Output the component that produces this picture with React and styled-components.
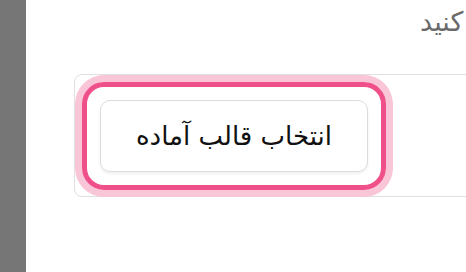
import React from "react";
import styled, { createGlobalStyle } from "styled-components";

const Global = createGlobalStyle`
  html, body { margin: 0; padding: 0; background: #ffffff; overflow: hidden; }
  body { font-family: "DejaVu Sans", "Noto Sans", sans-serif; }
`;

const Page = styled.div`
  display: flex;
  height: 272px;
  width: 466px;
  overflow: hidden;
`;

const Sidebar = styled.div`
  flex: 0 0 26px;
  background: #767676;
`;

const Main = styled.div`
  flex: 1 0 auto;
  display: flex;
  flex-direction: column;
  padding-left: 48px;
  width: 640px;
`;

const Title = styled.div`
  direction: rtl;
  text-align: left;
  white-space: nowrap;
  margin: 4px 0 0 346px;
  width: 600px;
  height: 70px;
  font-size: 27px;
  line-height: 36px;
  color: #6a6a6a;
`;

const Panel = styled.div`
  display: flex;
  align-items: flex-start;
  width: 620px;
  padding: 7px 0 6px 7px;
  border: 1px solid #e0e0e0;
  border-radius: 8px;
`;

const Ring = styled.div`
  display: flex;
  padding: 13px;
  border: 5px solid #f0508a;
  border-radius: 22px;
  box-shadow: 0 0 0 7px #f9c6d7;
`;

const Button = styled.button`
  width: 268px;
  height: 72px;
  display: flex;
  align-items: center;
  justify-content: center;
  direction: rtl;
  background: #ffffff;
  border: 1px solid #dcdcdc;
  border-radius: 10px;
  box-shadow: 0 2px 3px rgba(0, 0, 0, 0.06);
  font-family: "DejaVu Sans", "Noto Sans", sans-serif;
  font-size: 26px;
  color: #111111;
  padding: 0;
`;

export default function App() {
  return (
    <>
      <Global />
      <Page>
        <Sidebar />
        <Main>
          <Title>قالب مورد نظر خود را انتخاب کنید</Title>
          <Panel>
            <Ring>
              <Button>انتخاب قالب آماده</Button>
            </Ring>
          </Panel>
        </Main>
      </Page>
    </>
  );
}
